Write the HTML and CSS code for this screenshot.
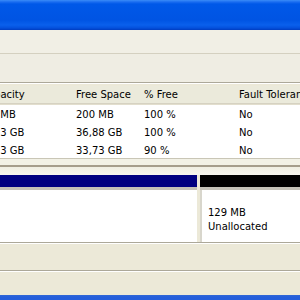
FILE: index.html
```html
<!DOCTYPE html>
<html lang="en">
<head>
  <meta charset="UTF-8">
  <title>Disk Management</title>
  <link rel="stylesheet" href="styles.css">
</head>
<body>
  <div class="titlebar"></div>
  <div class="menubar"></div>
  <div class="toolbar"></div>

  <div class="volumes">
    <div class="vol-row vol-head">
      <div class="cell c-cap">Capacity</div>
      <div class="cell c-free">Free Space</div>
      <div class="cell c-pct">% Free</div>
      <div class="cell c-fault">Fault Tolerance</div>
    </div>
    <div class="vol-row">
      <div class="cell c-cap">203 MB</div>
      <div class="cell c-free">200 MB</div>
      <div class="cell c-pct">100 %</div>
      <div class="cell c-fault">No</div>
    </div>
    <div class="vol-row">
      <div class="cell c-cap">37,23 GB</div>
      <div class="cell c-free">36,88 GB</div>
      <div class="cell c-pct">100 %</div>
      <div class="cell c-fault">No</div>
    </div>
    <div class="vol-row">
      <div class="cell c-cap">37,23 GB</div>
      <div class="cell c-free">33,73 GB</div>
      <div class="cell c-pct">90 %</div>
      <div class="cell c-fault">No</div>
    </div>
  </div>

  <div class="splitter"></div>

  <div class="disks">
    <div class="part part-primary">
      <div class="part-bar"></div>
      <div class="part-body"></div>
    </div>
    <div class="part part-free">
      <div class="part-bar"></div>
      <div class="part-body">
        <span>129 MB</span>
        <span>Unallocated</span>
      </div>
    </div>
  </div>

  <div class="legend"></div>
  <div class="statusbar"></div>
  <div class="taskbar"></div>
</body>
</html>
```

FILE: styles.css
```css
body {
  margin: 0;
  width: 300px;
  height: 300px;
  overflow: hidden;
  background: #ece9d8;
  font-family: "DejaVu Sans", sans-serif;
  font-size: 10px;
  color: #000;
}
.titlebar {
  height: 30px;
  background: linear-gradient(#3b8cf7 0, #1a6cf0 2px, #0058e8 4px, #0054e3 20px, #0a60ec 25px, #0450dc 28px, #003cc0 30px);
}
.menubar {
  height: 23px;
  background: #f1efe5;
  border-bottom: 1px solid #d4d0c0;
}
.toolbar {
  height: 28px;
  background: #efede3;
  border-bottom: 1px solid #aca899;
  box-shadow: 0 1px 0 #fff;
}
.volumes {
  margin-top: 3px;
  background: #fff;
  height: 72px;
  border-bottom: 1px solid #c9c6b6;
}
.vol-row {
  display: flex;
  height: 18px;
  align-items: center;
}
.vol-head {
  height: 17px;
  background: #ebeadb;
  border-bottom: 1px solid #d6d2c2;
  box-shadow: 0 1px 0 #e2decd;
  margin-bottom: 1px;
}
.cell {
  box-sizing: border-box;
  padding-left: 6px;
  white-space: nowrap;
  overflow: hidden;
}
.c-cap {
  width: 70px;
  padding-left: 0;
  text-indent: -22px;
}
.vol-head .c-cap {
  text-indent: -19px;
}
.c-free {
  width: 68px;
}
.c-pct {
  width: 95px;
}
.c-fault {
  flex: 1;
}
.vol-head .cell {
  height: 17px;
  line-height: 17px;
  position: relative;
}
.vol-head .cell + .cell::before {
  content: "";
  position: absolute;
  left: -2px;
  top: 3px;
  bottom: 3px;
  width: 1px;
  background: #c7c5b2;
  box-shadow: 1px 0 0 #fff;
}
.splitter {
  height: 16px;
  background: linear-gradient(#f2f1e6 0, #f2f1e6 6px, #a59d8c 6px, #a59d8c 8px, #efeee2 8px, #f7f6ee 16px);
}
.disks {
  display: flex;
  gap: 3px;
  height: 67px;
  border-bottom: 1px solid #aca899;
  box-shadow: 0 1px 0 #fff;
}
.part {
  display: flex;
  flex-direction: column;
}
.part-primary {
  width: 197px;
}
.part-free {
  flex: 1;
}
.part-bar {
  height: 12px;
  border-bottom: 3px solid #c4c2b8;
}
.part-primary .part-bar {
  background: #000080;
}
.part-free .part-bar {
  background: #000;
}
.part-body {
  flex: 1;
  background: #fff;
}
.part-free .part-body {
  border-left: 2px solid #d8d6cc;
  display: flex;
  flex-direction: column;
  justify-content: flex-end;
  padding: 0 0 8px 6px;
  line-height: 14px;
}
.legend {
  height: 25px;
  margin-top: 2px;
  border-bottom: 1px solid #aca899;
  box-shadow: 0 1px 0 #fff;
}
.statusbar {
  height: 23px;
  margin-top: 1px;
}
.taskbar {
  height: 5px;
  background: linear-gradient(#3168d5 0, #245edb 2px);
}
```
